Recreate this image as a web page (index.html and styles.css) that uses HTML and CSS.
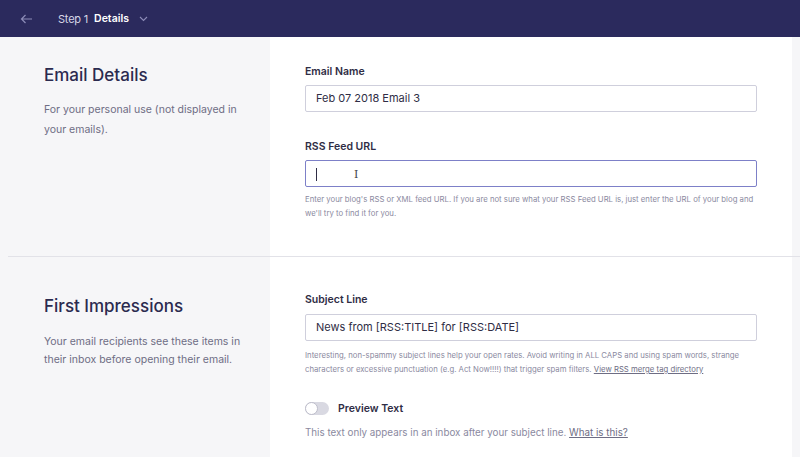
FILE: index.html
```html
<!DOCTYPE html>
<html>
<head>
    <meta charset="UTF-8">
    <meta name="viewport" content="width=device-width, initial-scale=1.0">
    <title>Email Details</title>
    <link rel="stylesheet" href="styles.css">
</head>
<body>
    <header class="topbar">
        <span class="back">
            <svg width="13" height="10" viewBox="0 0 13 10"><path d="M12 5H1.5M5.5 1L1.5 5l4 4" fill="none" stroke="#8d8cb8" stroke-width="1.2"/></svg>
        </span>
        <span class="step">Step 1</span>
        <span class="step-name">Details</span>
        <svg class="chev" width="9" height="6" viewBox="0 0 9 6"><path d="M1 1l3.5 3.5L8 1" fill="none" stroke="#8d8cb8" stroke-width="1.1"/></svg>
    </header>

    <section class="group first">
        <div class="side">
            <h2>Email Details</h2>
            <p>For your personal use (not displayed in your emails).</p>
        </div>
        <div class="fields">
            <label class="label">Email Name</label>
            <div class="input">Feb 07 2018 Email 3</div>

            <label class="label spaced">RSS Feed URL</label>
            <div class="input focus"><span class="caret"></span><span class="ibeam">I</span></div>
            <p class="help">Enter your blog's RSS or XML feed URL. If you are not sure what your RSS Feed URL is, just enter the URL of your blog and we'll try to find it for you.</p>
        </div>
    </section>

    <div class="divider"></div>

    <section class="group second">
        <div class="side">
            <h2>First Impressions</h2>
            <p>Your email recipients see these items in their inbox before opening their email.</p>
        </div>
        <div class="fields">
            <label class="label">Subject Line</label>
            <div class="input">News from [RSS:TITLE] for [RSS:DATE]</div>
            <p class="help">Interesting, non-spammy subject lines help your open rates. Avoid writing in ALL CAPS and using spam words, strange characters or excessive punctuation (e.g. Act Now!!!!) that trigger spam filters. <a href="#">View RSS merge tag directory</a></p>

            <div class="toggle-row">
                <span class="toggle"><span class="knob"></span></span>
                <span class="toggle-label">Preview Text</span>
            </div>
            <p class="note">This text only appears in an inbox after your subject line. <a href="#">What is this?</a></p>
        </div>
    </section>
</body>
</html>
```

FILE: styles.css
```css
body {
    margin: 0;
    background: #f6f6f8;
    font-family: Inter, "Liberation Sans", sans-serif;
    color: #2f2d4d;
    overflow: hidden;
}
.topbar {
    height: 37px;
    background: #2b2a5d;
    display: flex;
    align-items: center;
    padding-left: 20px;
    font-size: 11px;
}
.back {
    display: flex;
    margin-right: 25px;
}
.step {
    color: #d6d6e6;
    letter-spacing: -0.2px;
}
.step-name {
    color: #fff;
    font-weight: 600;
    font-size: 10.5px;
    margin-left: 6px;
}
.chev {
    margin-left: 10px;
}
.group {
    display: grid;
    grid-template-columns: 270px 1fr;
    margin-right: 8px;
}
.side {
    padding-left: 44px;
    padding-right: 18px;
}
.side h2 {
    font-size: 17px;
    font-weight: 500;
    color: #2b2a4f;
    margin: 28px 0 0 0;
}
.side p {
    font-size: 10.5px;
    line-height: 20px;
    color: #6e6d84;
    margin: 15px 0 0 0;
}
.second .side p {
    line-height: 18px;
    margin-top: 17px;
}
.fields {
    background: #fff;
    padding: 0 35px 0 35px;
}
.first .fields {
    padding-top: 28px;
    padding-bottom: 36px;
}
.second .fields {
    padding-top: 36px;
    padding-bottom: 30px;
}
.second .side h2 {
    margin-top: 39px;
}
.label {
    display: block;
    font-size: 10.5px;
    font-weight: 600;
    color: #2f2d45;
    margin-bottom: 8px;
}
.first .label {
    margin-bottom: 7px;
}
.label.spaced {
    margin-top: 28px;
}
.input {
    position: relative;
    height: 25px;
    border: 1px solid #cfcfdc;
    border-radius: 2px;
    font-size: 11px;
    line-height: 25px;
    padding-left: 10px;
    color: #2f2d45;
}
.input.focus {
    border-color: #7d80c8;
}
.caret {
    display: inline-block;
    width: 1px;
    height: 13px;
    background: #2f2d45;
    vertical-align: middle;
}
.ibeam {
    position: absolute;
    left: 48px;
    top: 1px;
    font-family: "DejaVu Serif", serif;
    font-size: 11px;
    color: #444;
}
.help {
    font-size: 7.75px;
    line-height: 13.5px;
    color: #8a89a0;
    margin: 6px 0 0 0;
}
.second .help {
    margin-top: 7px;
    line-height: 14px;
}
.help a, .note a {
    color: #6e6d84;
}
.toggle-row {
    display: flex;
    align-items: center;
    margin-top: 26px;
}
.toggle {
    width: 24px;
    height: 13px;
    border-radius: 7px;
    background: #d9d9e2;
    position: relative;
}
.knob {
    position: absolute;
    left: 0;
    top: 0;
    width: 11px;
    height: 11px;
    border-radius: 50%;
    background: #fff;
    border: 1px solid #bdbdca;
}
.toggle-label {
    font-size: 10.5px;
    font-weight: 600;
    margin-left: 9px;
    color: #2f2d45;
}
.note {
    font-size: 9.8px;
    color: #8a89a0;
    margin: 12px 0 0 0;
}
.divider {
    height: 1px;
    background: #e2e2e8;
    margin-left: 8px;
}
```
